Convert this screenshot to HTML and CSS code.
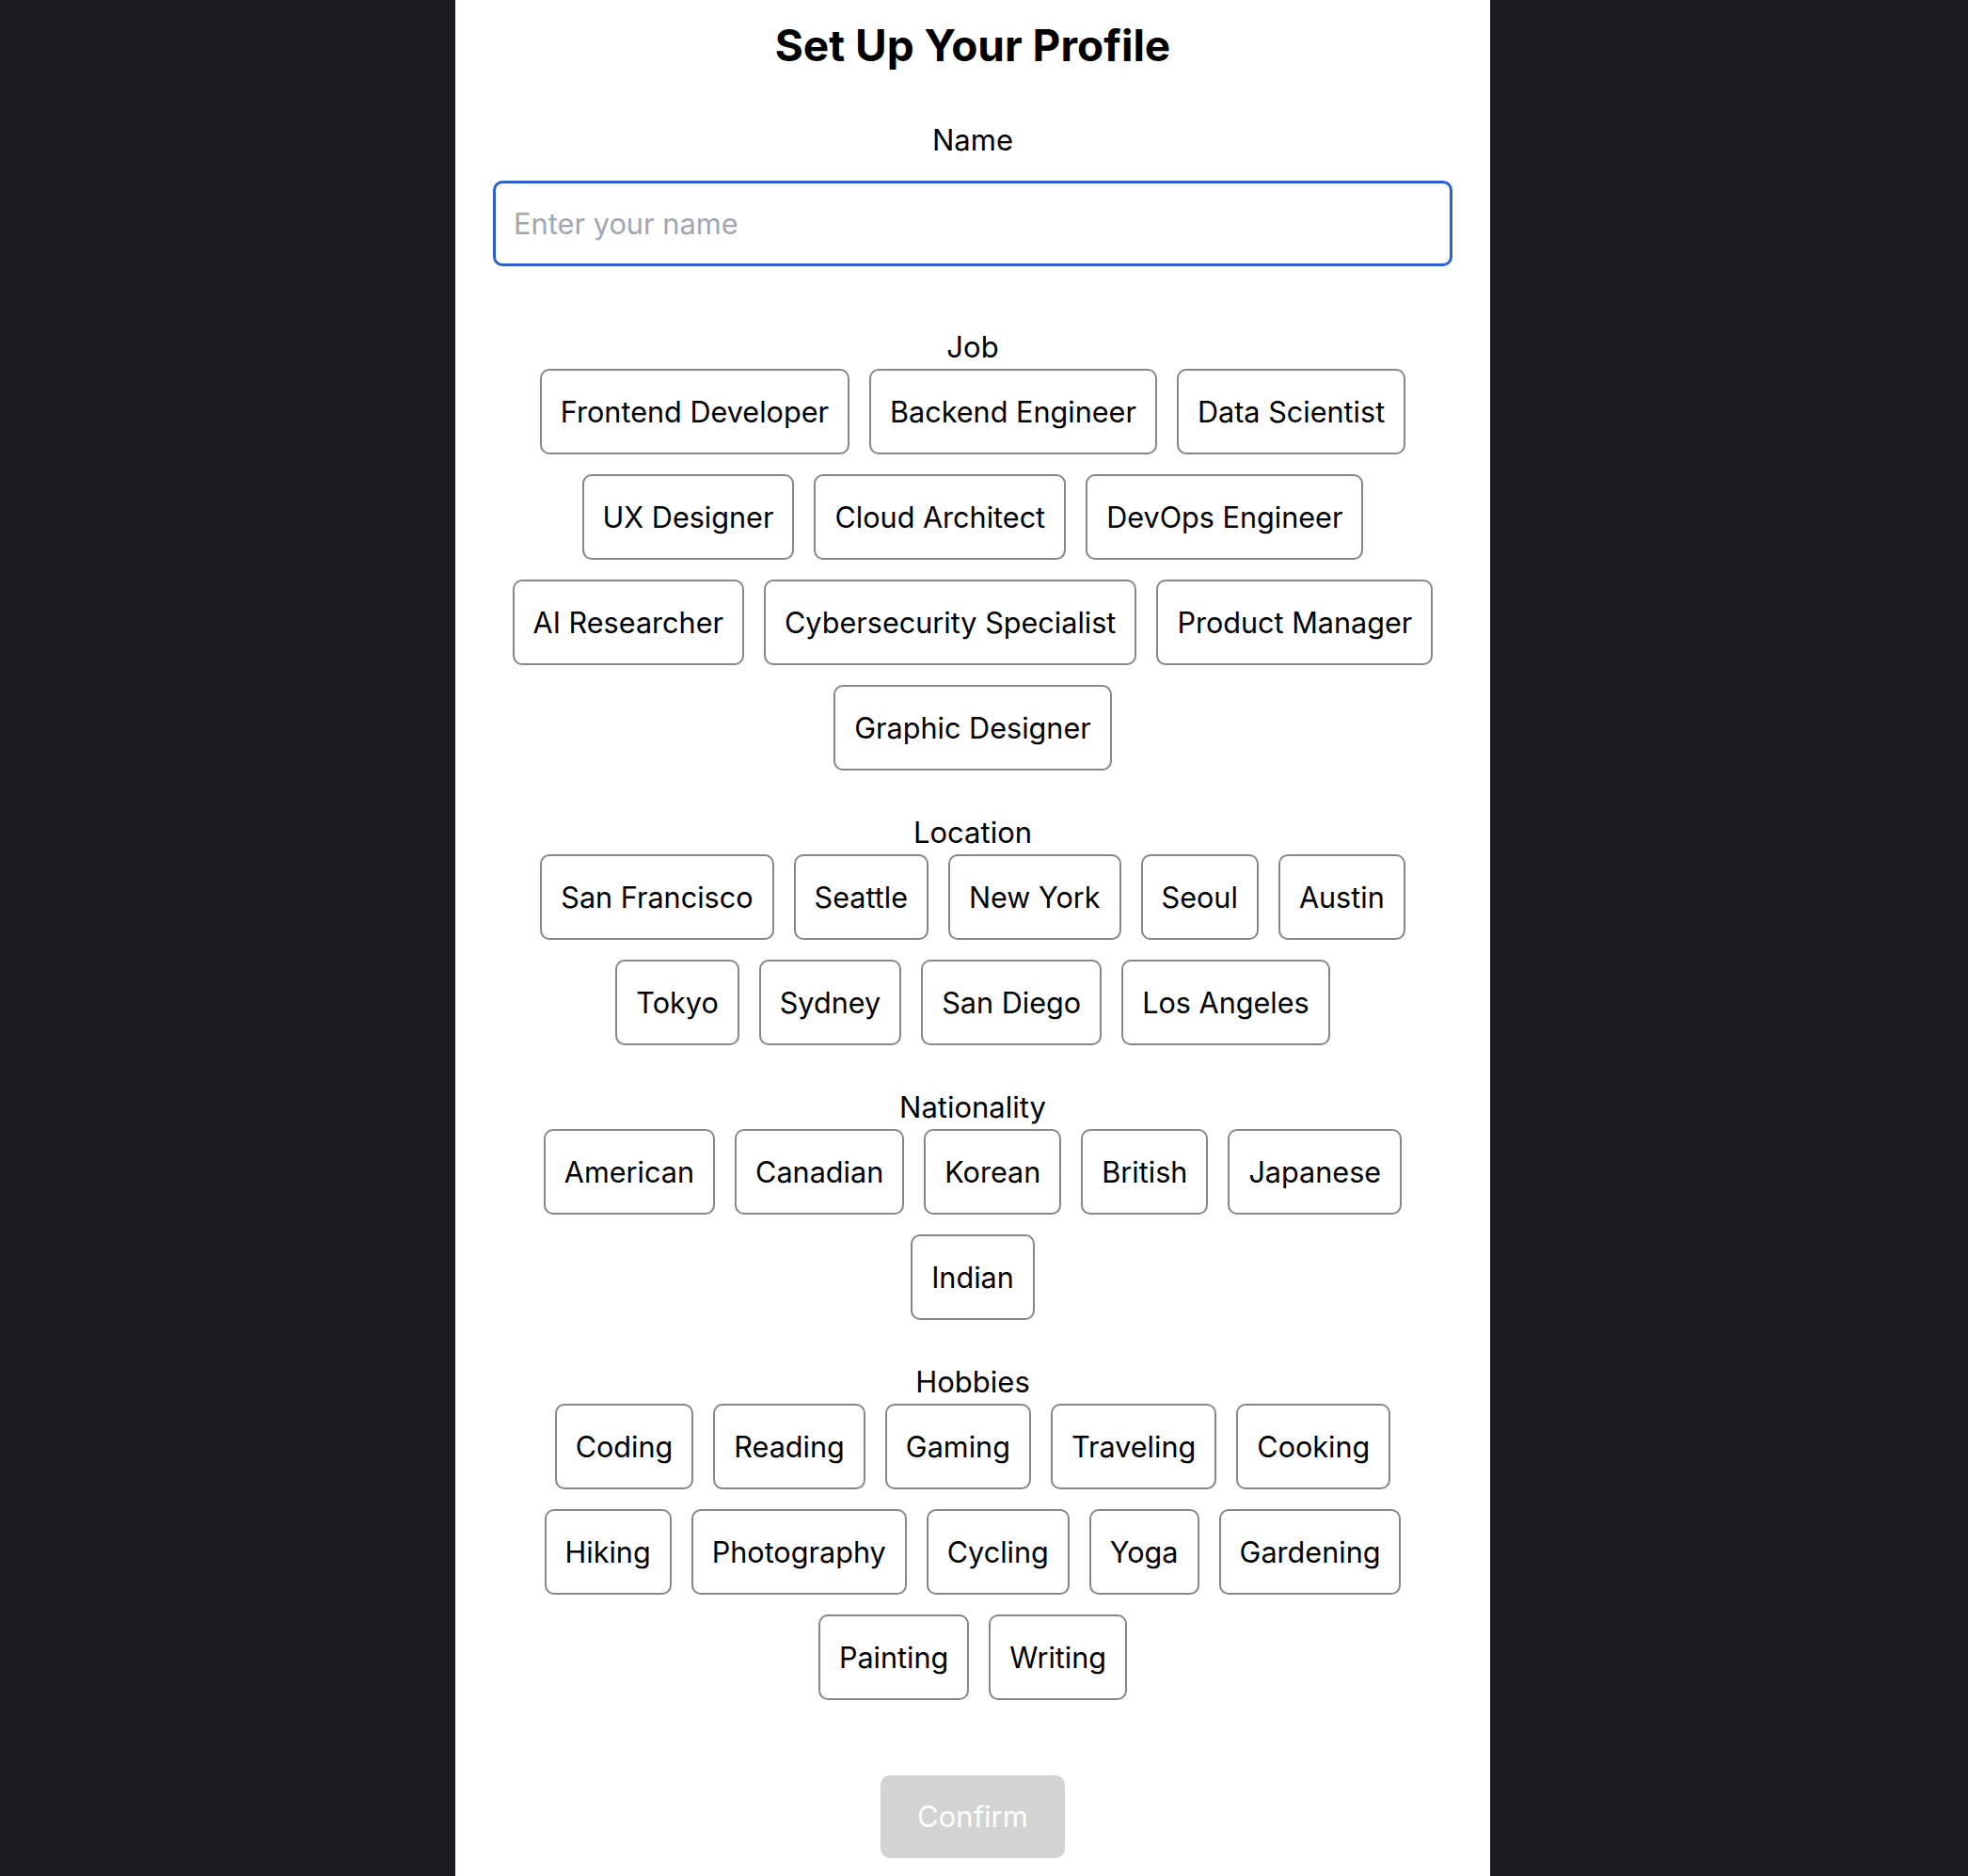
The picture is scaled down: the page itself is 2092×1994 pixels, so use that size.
FILE: index.html
```html
<!DOCTYPE html>
<html lang="en">
<head>
<meta charset="utf-8">
<title>Set Up Your Profile</title>
<link rel="stylesheet" href="styles.css">
</head>
<body>
<div class="page">
  <main class="panel">
    <h1 class="title">Set Up Your Profile</h1>

    <div class="field name-field">
      <label class="field-label" for="name">Name</label>
      <input class="text-input" id="name" type="text" placeholder="Enter your name">
    </div>

    <section class="section">
      <div class="field-label">Job</div>
      <div class="chips">
        <button class="chip">Frontend Developer</button>
        <button class="chip">Backend Engineer</button>
        <button class="chip">Data Scientist</button>
        <button class="chip">UX Designer</button>
        <button class="chip">Cloud Architect</button>
        <button class="chip">DevOps Engineer</button>
        <button class="chip">AI Researcher</button>
        <button class="chip">Cybersecurity Specialist</button>
        <button class="chip">Product Manager</button>
        <button class="chip">Graphic Designer</button>
      </div>
    </section>

    <section class="section">
      <div class="field-label">Location</div>
      <div class="chips">
        <button class="chip">San Francisco</button>
        <button class="chip">Seattle</button>
        <button class="chip">New York</button>
        <button class="chip">Seoul</button>
        <button class="chip">Austin</button>
        <button class="chip">Tokyo</button>
        <button class="chip">Sydney</button>
        <button class="chip">San Diego</button>
        <button class="chip">Los Angeles</button>
      </div>
    </section>

    <section class="section">
      <div class="field-label">Nationality</div>
      <div class="chips">
        <button class="chip">American</button>
        <button class="chip">Canadian</button>
        <button class="chip">Korean</button>
        <button class="chip">British</button>
        <button class="chip">Japanese</button>
        <button class="chip">Indian</button>
      </div>
    </section>

    <section class="section">
      <div class="field-label">Hobbies</div>
      <div class="chips">
        <button class="chip">Coding</button>
        <button class="chip">Reading</button>
        <button class="chip">Gaming</button>
        <button class="chip">Traveling</button>
        <button class="chip">Cooking</button>
        <button class="chip">Hiking</button>
        <button class="chip">Photography</button>
        <button class="chip">Cycling</button>
        <button class="chip">Yoga</button>
        <button class="chip">Gardening</button>
        <button class="chip">Painting</button>
        <button class="chip">Writing</button>
      </div>
    </section>

    <div class="actions">
      <button class="confirm" disabled>Confirm</button>
    </div>
  </main>
</div>
</body>
</html>
```

FILE: styles.css
```css
* {
  box-sizing: border-box;
}

html, body {
  margin: 0;
  padding: 0;
}

body {
  background: #1c1b22;
  font-family: Inter, "Noto Sans", "Liberation Sans", sans-serif;
  color: #000;
}

.page {
  display: flex;
  justify-content: center;
  padding-right: 24px;
  min-height: 100vh;
}

.panel {
  width: 1100px;
  background: #fff;
  padding: 21px 40px 60px;
  min-height: 100vh;
}

.title {
  margin: 0;
  text-align: center;
  font-size: 46px;
  line-height: 55px;
  font-weight: 700;
  letter-spacing: 0;
}

.field {
  margin-top: 55px;
}

.name-field {
  padding-bottom: 20px;
}

.field-label {
  display: block;
  text-align: center;
  font-size: 31px;
  line-height: 36px;
  margin-bottom: 5px;
}

.name-field .field-label {
  margin-bottom: 25px;
}

.text-input {
  display: block;
  width: 100%;
  height: 91px;
  border: 3px solid #2a62c9;
  border-radius: 10px;
  padding: 0 19px;
  font-family: inherit;
  font-size: 30.8px;
  color: #000;
  outline: none;
  background: #fff;
}

.text-input::placeholder {
  color: #a2a6b1;
}

.section {
  margin-top: 48px;
}

.chips {
  max-width: 1005px;
  margin: 0 auto;
  display: flex;
  flex-wrap: wrap;
  justify-content: center;
  gap: 21px;
}

.chip {
  font-family: inherit;
  font-size: 30.6px;
  line-height: 37px;
  color: #000;
  background: #fff;
  border: 2px solid #878787;
  border-radius: 10px;
  padding: 25px 20px;
  margin: 0;
  cursor: pointer;
}

.actions {
  display: flex;
  justify-content: center;
  margin-top: 80px;
}

.confirm {
  font-family: inherit;
  font-size: 31px;
  line-height: 36px;
  padding: 26px 39px;
  border: none;
  border-radius: 10px;
  background: #d3d3d3;
  color: #fff;
}
```
